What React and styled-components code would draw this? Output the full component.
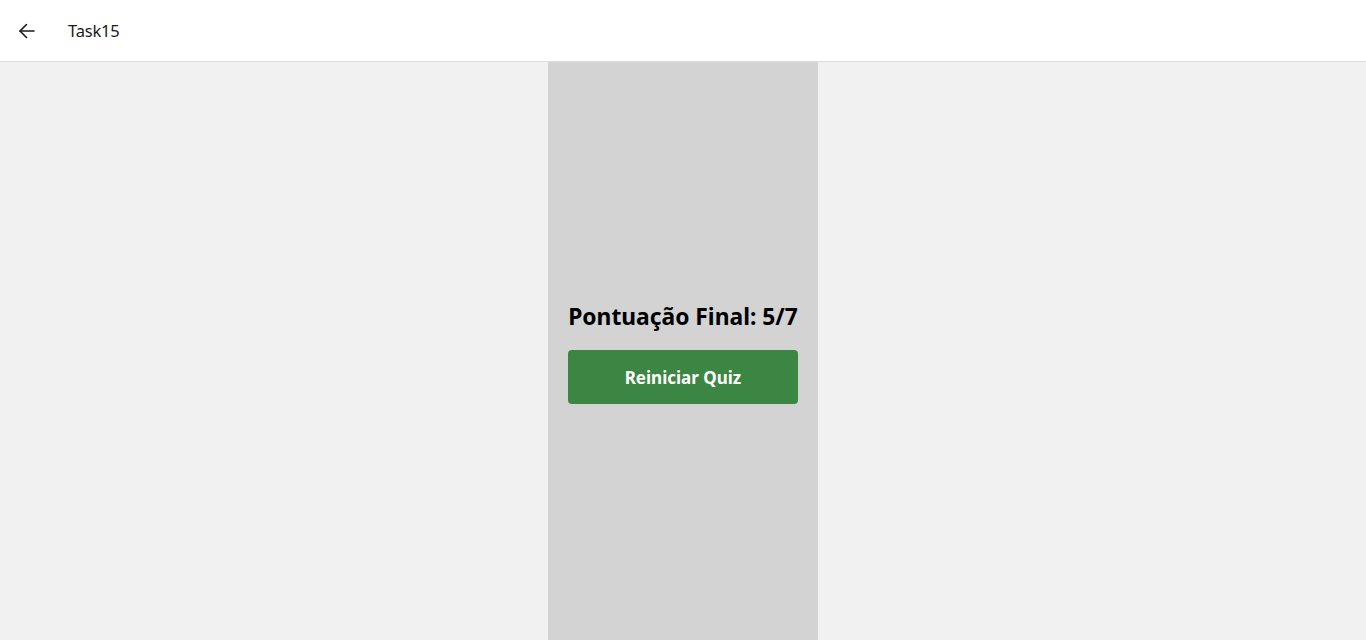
import React from "react";
import styled, { createGlobalStyle } from "styled-components";

const Global = createGlobalStyle`
  html, body { margin: 0; padding: 0; height: 100%; }
  body { font-family: "Noto Sans", "Open Sans", sans-serif; background: #f1f1f1; }
`;

const Page = styled.div`
  display: flex;
  flex-direction: column;
  height: 100vh;
  overflow: hidden;
`;

const TopBar = styled.header`
  height: 61px;
  flex: none;
  display: flex;
  align-items: center;
  background: #ffffff;
  border-bottom: 1px solid #dcdcdc;
  padding-left: 15px;
  gap: 29px;
`;

const BackButton = styled.button`
  border: 0;
  background: transparent;
  padding: 0;
  width: 24px;
  height: 24px;
  display: flex;
  align-items: center;
  justify-content: center;
  color: #1a1a1a;
`;

const Title = styled.span`
  font-size: 16.5px;
  color: #1a1a1a;
  letter-spacing: -0.2px;
`;

const Body = styled.main`
  flex: 1;
  display: flex;
  justify-content: center;
`;

const Column = styled.section`
  width: 270px;
  box-sizing: border-box;
  padding: 4px 20px 0;
  background: #d3d3d3;
  display: flex;
  flex-direction: column;
  justify-content: center;
  align-items: stretch;
  gap: 18px;
`;

const Score = styled.h2`
  margin: 0;
  text-align: center;
  font-size: 22.8px;
  line-height: 30px;
  font-weight: 700;
  color: #000;
  white-space: nowrap;
`;

const RestartButton = styled.button`
  height: 54px;
  border: 0;
  border-radius: 4px;
  background: #3b8643;
  color: #fff;
  font-family: inherit;
  font-size: 17px;
  font-weight: 700;
  cursor: pointer;
`;

export default function App() {
  return (
    <>
      <Global />
      <Page>
        <TopBar>
          <BackButton aria-label="Voltar">
            <svg width="20" height="20" viewBox="0 0 20 20" fill="none" stroke="currentColor" strokeWidth="1.6" strokeLinecap="round" strokeLinejoin="round">
              <path d="M17 10H3" />
              <path d="M9.5 3.5L3 10l6.5 6.5" />
            </svg>
          </BackButton>
          <Title>Task15</Title>
        </TopBar>
        <Body>
          <Column>
            <Score>Pontuação Final: 5/7</Score>
            <RestartButton>Reiniciar Quiz</RestartButton>
          </Column>
        </Body>
      </Page>
    </>
  );
}
